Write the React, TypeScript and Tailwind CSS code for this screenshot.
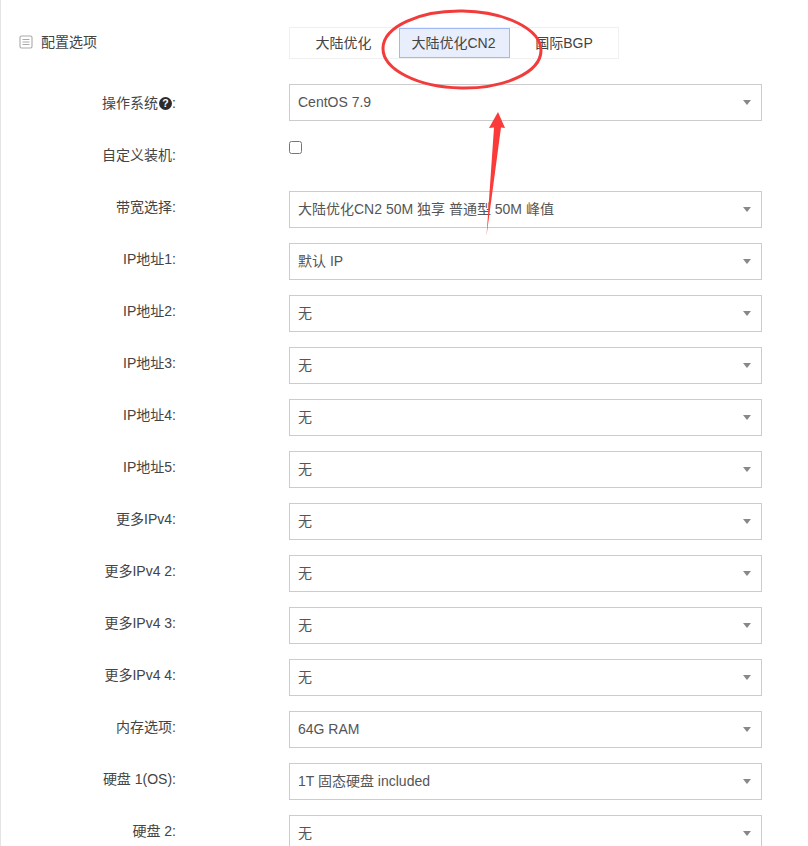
const fontStack = "font-['Liberation_Sans','Noto_Sans_CJK_SC',sans-serif]";

type Row = { label: string; value: string };

const rows: Row[] = [
  { label: '带宽选择:', value: '大陆优化CN2 50M 独享 普通型 50M 峰值' },
  { label: 'IP地址1:', value: '默认 IP' },
  { label: 'IP地址2:', value: '无' },
  { label: 'IP地址3:', value: '无' },
  { label: 'IP地址4:', value: '无' },
  { label: 'IP地址5:', value: '无' },
  { label: '更多IPv4:', value: '无' },
  { label: '更多IPv4 2:', value: '无' },
  { label: '更多IPv4 3:', value: '无' },
  { label: '更多IPv4 4:', value: '无' },
  { label: '内存选项:', value: '64G RAM' },
  { label: '硬盘 1(OS):', value: '1T 固态硬盘 included' },
  { label: '硬盘 2:', value: '无' },
];

function SelectBox({ value }: { value: string }) {
  return (
    <div className="flex h-[37px] w-[473px] shrink-0 items-center justify-between border border-[#cccccc] bg-white pl-2 pr-[10px] text-[14px] text-[#555555]">
      <span>{value}</span>
      <span className="h-0 w-0 border-x-[4px] border-t-[5px] border-x-transparent border-t-[#888888]" />
    </div>
  );
}

function FormRow({ label, value }: Row) {
  return (
    <div className="flex h-[37px] items-start">
      <label className="w-[175px] shrink-0 pt-[6px] text-right text-[14px] leading-5 text-[#444444]">{label}</label>
      <div className="ml-[113px]">
        <SelectBox value={value} />
      </div>
    </div>
  );
}

export default function App() {
  return (
    <div className={`relative h-[846px] w-[808px] overflow-hidden border-l border-[#e4e4e4] bg-white ${fontStack}`}>
      <div className="flex h-[84px] items-start pt-[27px]">
        <div className="flex h-[30px] w-[288px] shrink-0 items-center pl-[18px] text-[14px] text-[#444444]">
          <svg width="14" height="14" viewBox="0 0 14 14" fill="none" stroke="#aaaaaa" strokeWidth="1.1">
            <rect x="1" y="1" width="12" height="12" rx="1.5" />
            <path d="M3.5 4.5h7M3.5 7h7M3.5 9.5h7" />
          </svg>
          <span className="ml-[8px]">配置选项</span>
        </div>
        <div className="flex h-[32px] w-[330px] items-stretch border border-[#f0f0f0] text-[14px] text-[#444444]">
          <div className="flex w-[109px] items-center justify-center pr-[2px] pt-[1px]">大陆优化</div>
          <div className="flex w-[111px] items-center justify-center border border-[#a2b8f2] bg-[#e8eefc] pr-[2px] pt-[1px]">大陆优化CN2</div>
          <div className="flex w-[108px] items-center justify-center pt-[1px]">国际BGP</div>
        </div>
      </div>

      <div className="flex flex-col">
        <FormRow label="" value="CentOS 7.9" />
        <div className="flex h-[70px] items-start">
          <label className="w-[175px] shrink-0 pt-[24px] text-right text-[14px] leading-5 text-[#444444]">自定义装机:</label>
          <input type="checkbox" className="ml-[113px] mt-[20px] h-[13px] w-[13px]" readOnly />
        </div>
        <div className="flex flex-col gap-[15px]">
          {rows.map((row) => (
            <FormRow key={row.label} label={row.label} value={row.value} />
          ))}
        </div>
      </div>

      <div className="absolute left-0 top-[93px] flex w-[175px] items-center justify-end text-[14px] leading-5 text-[#444444]">
        操作系统
        <svg className="ml-[1px]" width="13" height="13" viewBox="0 0 13 13">
          <circle cx="6.5" cy="6.5" r="6.5" fill="#2b2b2b" />
          <text x="6.5" y="10.3" textAnchor="middle" fontSize="10.5" fontWeight="700" fill="#ffffff">?</text>
        </svg>
        :
      </div>

      <svg className="absolute -left-px top-0" width="808" height="846" viewBox="0 0 808 846" fill="none">
        <ellipse cx="462" cy="49.5" rx="79" ry="38.5" stroke="#f23c3c" strokeWidth="3" transform="rotate(1 462 49)" />
        <path d="M498 112 L505 128 L501 127.5 L486.5 236 L494 127.5 L489 128 Z" fill="#fb3a3a" />
      </svg>
    </div>
  );
}
